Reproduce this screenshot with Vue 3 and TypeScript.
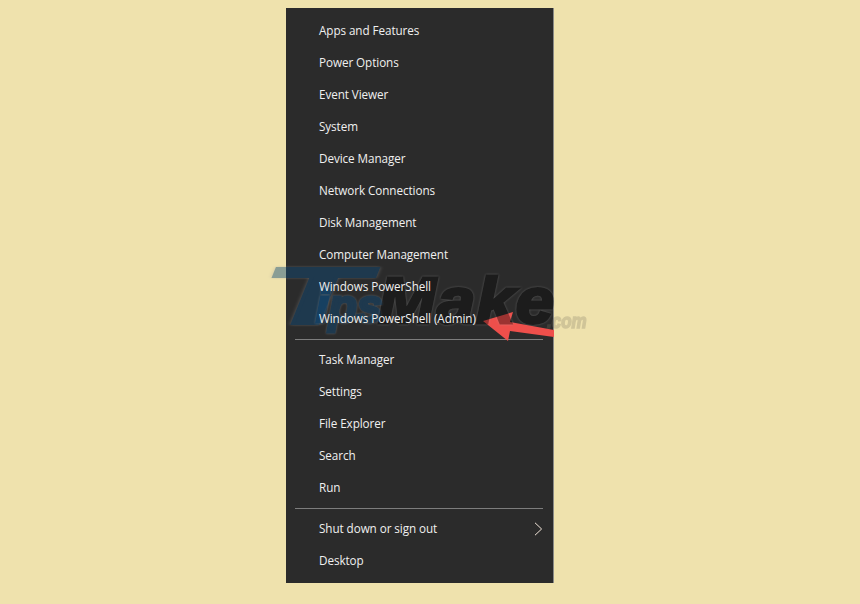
<script setup lang="ts">
const groupA: string[] = ['Apps and Features','Power Options','Event Viewer','System','Device Manager','Network Connections','Disk Management','Computer Management','Windows PowerShell','Windows PowerShell (Admin)']
const groupB: string[] = ['Task Manager','Settings','File Explorer','Search','Run']
</script>

<template>
  <div class="page">
    <div class="menu">
      <div class="group">
        <div v-for="t in groupA" :key="t" class="row">{{ t }}</div>
      </div>
      <div class="sep"></div>
      <div class="group">
        <div v-for="t in groupB" :key="t" class="row">{{ t }}</div>
      </div>
      <div class="sep"></div>
      <div class="group">
        <div class="row">
          Shut down or sign out
          <svg class="chev" width="9" height="14" viewBox="0 0 9 14"><path d="M1 .8 7.6 7 1 13.2" fill="none" stroke="#f3e6da" stroke-width="1"/></svg>
        </div>
        <div class="row">Desktop</div>
      </div>
    </div>
    <svg class="arrow" width="74" height="34" viewBox="0 0 74 34">
      <path d="M2 12 32 3 29 13 73 21 73 28 29 22 27 32Z" fill="#ee4f4b"/>
    </svg>
    <div class="mark">
      <span class="t">T</span><span class="ips">ips</span><span class="make">Make</span><span class="com">.com</span>
    </div>
  </div>
</template>

<style>
html, body { margin: 0; background: #efe2ad; }
</style>

<style scoped>
.page { position: relative; width: 860px; height: 604px; background: #efe2ad; overflow: hidden; padding-top: 8px; box-sizing: border-box; }
.menu { width: 268px; height: 575px; margin-left: 286px; box-sizing: border-box; padding: 7px 0 6px; background: #2b2b2b; border-right: 1px solid #8a8a86; font-family: "Open Sans", sans-serif; font-size: 11.7px; letter-spacing: -.07px; color: #f0f0f0; }
.row { position: relative; z-index: 2; height: 32px; line-height: 30px; padding-left: 33px; white-space: nowrap; }
.sep { height: 1px; background: #7d7d7d; margin: 4px 10px 4px 9px; }
.chev { position: absolute; right: 10px; top: 9px; }
.arrow { position: absolute; left: 481px; top: 309px; }
.mark { position: absolute; z-index: 1; inset: 0; font-family: "Liberation Sans", sans-serif; font-weight: 700; font-style: italic; line-height: 1; white-space: nowrap; pointer-events: none; }
.mark span { position: absolute; }
.t, .ips { color: #0f4a7a; -webkit-text-stroke: 3px #0f4a7a; opacity: .45; filter: drop-shadow(0 0 1px #999); }
.t { left: 262px; top: 256px; font-size: 81px; transform: scaleX(2.1); transform-origin: left top; -webkit-text-stroke-width: 2px; }
.ips { left: 316px; top: 283px; font-size: 46px; }
.make { left: 378px; top: 269px; font-size: 64px; letter-spacing: 1px; transform: scaleX(1.08); transform-origin: left top; color: #000; -webkit-text-stroke: 3px #000; opacity: .34; filter: drop-shadow(0 0 1px #bbb); }
.com { left: 547px; top: 311px; font-size: 20px; transform: scaleX(.85); transform-origin: left top; color: #7a7460; -webkit-text-stroke: 1.5px #7a7460; opacity: .26; }
</style>
